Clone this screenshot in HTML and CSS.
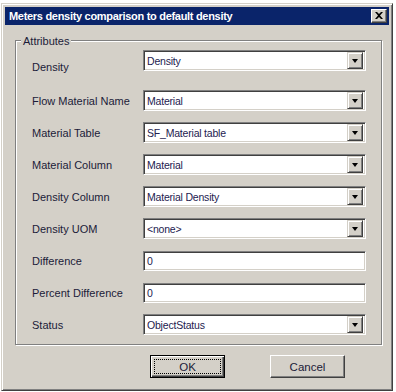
FILE: index.html
```html
<!DOCTYPE html>
<html>
<head>
<meta charset="utf-8">
<link rel="stylesheet" href="styles.css">
</head>
<body>
<div class="window">
  <div class="titlebar">
    <span class="title">Meters density comparison to default density</span>
    <span class="close"><svg width="8" height="7" viewBox="0 0 8 7"><path d="M0 0h2l2 2 2-2h2L5 3.5 8 7H6L4 5 2 7H0l3-3.5z" fill="#000"/></svg></span>
  </div>
  <div class="content">
    <div class="group">
      <span class="group-title">Attributes</span>
      <div class="rows">
        <div class="row first"><span class="label low">Density</span><div class="combo"><span class="val">Density</span><span class="drop"><i></i></span></div></div>
        <div class="row"><span class="label">Flow Material Name</span><div class="combo"><span class="val">Material</span><span class="drop"><i></i></span></div></div>
        <div class="row"><span class="label">Material Table</span><div class="combo"><span class="val">SF_Material table</span><span class="drop"><i></i></span></div></div>
        <div class="row"><span class="label">Material Column</span><div class="combo"><span class="val">Material</span><span class="drop"><i></i></span></div></div>
        <div class="row"><span class="label">Density Column</span><div class="combo"><span class="val">Material Density</span><span class="drop"><i></i></span></div></div>
        <div class="row"><span class="label">Density UOM</span><div class="combo"><span class="val">&lt;none&gt;</span><span class="drop"><i></i></span></div></div>
        <div class="row"><span class="label">Difference</span><div class="combo text"><span class="val">0</span></div></div>
        <div class="row"><span class="label">Percent Difference</span><div class="combo text"><span class="val">0</span></div></div>
        <div class="row"><span class="label">Status</span><div class="combo"><span class="val">ObjectStatus</span><span class="drop"><i></i></span></div></div>
      </div>
    </div>
    <div class="buttons">
      <div class="btn default"><span class="focus">OK</span></div>
      <div class="btn">Cancel</div>
    </div>
  </div>
</div>
</body>
</html>
```
FILE: styles.css
```css
html, body {
  margin: 0;
  padding: 0;
  background: #ffffff;
}
body {
  font-family: "Liberation Sans", Arial, sans-serif;
  font-size: 11px;
  color: #1b1b38;
}
.window {
  margin: 3px 0 0 1px;
  width: 392px;
  height: 388px;
  box-sizing: border-box;
  background: #d4d0c8;
  border: 1px solid;
  border-color: #d4d0c8 #404040 #404040 #d4d0c8;
  box-shadow: inset 1px 1px 0 #ffffff, inset -1px -1px 0 #808080;
  padding: 3px;
  display: flex;
  flex-direction: column;
}
.titlebar {
  height: 18px;
  background: #0a246a;
  display: flex;
  align-items: center;
  justify-content: space-between;
  padding: 0 2px 0 4px;
}
.title {
  color: #ffffff;
  font-weight: bold;
  font-size: 11px;
  letter-spacing: -0.3px;
  line-height: 14px;
}
.close {
  width: 16px;
  height: 14px;
  box-sizing: border-box;
  background: #d4d0c8;
  border: 1px solid;
  border-color: #ffffff #404040 #404040 #ffffff;
  box-shadow: inset -1px -1px 0 #808080;
  display: flex;
  align-items: center;
  justify-content: center;
  padding: 0 1px 1px 0;
}
.close svg { display: block; }
.content {
  flex: 1;
  padding: 15px 6px 0 10px;
}
.group {
  border: 1px solid #808080;
  box-shadow: 1px 1px 0 #ffffff, inset 1px 1px 0 #ffffff;
  padding: 0 15px 9px 16px;
  margin-right: 1px;
}
.group-title {
  display: block;
  width: fit-content;
  margin: -7px 0 0 -11px;
  padding: 0 2px;
  background: #d4d0c8;
  line-height: 14px;
}
.rows {
  margin-top: 2px;
  display: flex;
  flex-direction: column;
  gap: 11px;
}
.row {
  display: flex;
  align-items: center;
  height: 21px;
}
.row.first { margin-bottom: 8px; }
.label {
  width: 111px;
  flex: none;
  white-space: nowrap;
}
.label.low { padding-top: 12px; }
.combo {
  width: 223px;
  height: 21px;
  box-sizing: border-box;
  background: #ffffff;
  border: 1px solid;
  border-color: #808080 #ffffff #ffffff #808080;
  box-shadow: inset 1px 1px 0 #404040, inset -1px -1px 0 #d4d0c8;
  display: flex;
  align-items: center;
  padding: 2px 2px 2px 3px;
}
.combo.text { height: 20px; }
.val {
  flex: 1;
  font-size: 10.5px;
  letter-spacing: -0.2px;
  color: #23214f;
  white-space: nowrap;
}
.drop {
  width: 16px;
  height: 17px;
  box-sizing: border-box;
  background: #d4d0c8;
  border: 1px solid;
  border-color: #d4d0c8 #404040 #404040 #d4d0c8;
  box-shadow: inset 1px 1px 0 #ffffff, inset -1px -1px 0 #808080;
  display: flex;
  align-items: center;
  justify-content: center;
}
.drop i {
  width: 0;
  height: 0;
  border-left: 3.5px solid transparent;
  border-right: 3.5px solid transparent;
  border-top: 4px solid #000000;
}
.buttons {
  display: flex;
  gap: 45px;
  margin-top: 10px;
  padding-left: 135px;
}
.btn {
  width: 75px;
  height: 23px;
  box-sizing: border-box;
  background: #d4d0c8;
  border: 1px solid;
  border-color: #ffffff #404040 #404040 #ffffff;
  box-shadow: inset -1px -1px 0 #808080;
  display: flex;
  align-items: center;
  justify-content: center;
  font-size: 11.5px;
  color: #1b1b38;
}
.btn.default {
  border: 1px solid #000000;
  box-shadow: inset 1px 1px 0 #ffffff, inset -1px -1px 0 #404040, inset -2px -2px 0 #808080;
  padding: 3px;
}
.focus {
  flex: 1;
  align-self: stretch;
  display: flex;
  align-items: center;
  justify-content: center;
  border: 1px dotted #000000;
}
```
